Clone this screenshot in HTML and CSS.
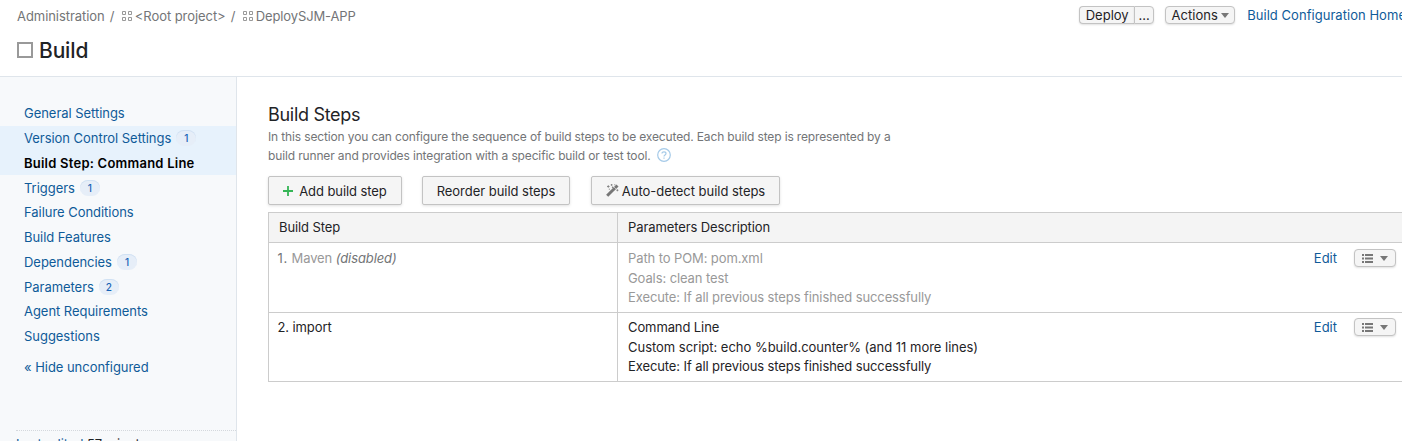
FILE: index.html
```html
<!DOCTYPE html>
<html lang="en">
<head>
<meta charset="utf-8">
<title>Build Steps</title>
<link rel="stylesheet" href="styles.css">
</head>
<body>
<header class="header">
  <div class="topbar">
    <nav class="crumbs">
      <span>Administration</span><span class="slash">/</span>
      <svg class="grid" viewBox="0 0 10 10"><path d="M.5.5h3v3h-3zM6.5.5h3v3h-3zM.5 6.5h3v3h-3zM6.5 6.5h3v3h-3z"/></svg><span>&lt;Root project&gt;</span><span class="slash">/</span>
      <svg class="grid" viewBox="0 0 10 10"><path d="M.5.5h3v3h-3zM6.5.5h3v3h-3zM.5 6.5h3v3h-3zM6.5 6.5h3v3h-3z"/></svg><span class="app">DeploySJM-APP</span>
    </nav>
    <div class="tools">
      <div class="split"><button class="mini deploy">Deploy</button><button class="mini more">...</button></div>
      <button class="mini actions">Actions<span class="caret"></span></button>
      <a class="home">Build Configuration Home</a>
    </div>
  </div>
  <div class="title"><span class="box"></span><h1>Build</h1></div>
</header>
<div class="body">
  <aside class="side">
    <ul class="menu">
      <li><a>General Settings</a></li>
      <li class="hl"><a>Version Control Settings</a><span class="badge">1</span></li>
      <li class="hl"><b>Build Step: Command Line</b></li>
      <li><a>Triggers</a><span class="badge">1</span></li>
      <li><a>Failure Conditions</a></li>
      <li><a>Build Features</a></li>
      <li><a>Dependencies</a><span class="badge">1</span></li>
      <li><a>Parameters</a><span class="badge">2</span></li>
      <li><a>Agent Requirements</a></li>
      <li><a>Suggestions</a></li>
    </ul>
    <a class="hide">« Hide unconfigured</a>
    <div class="edited"><a>Last edited</a> <span>57 minutes</span></div>
  </aside>
  <main class="main">
    <h2>Build Steps</h2>
    <p class="note">In this section you can configure the sequence of build steps to be executed. Each build step is represented by a<br>build runner and provides integration with a specific build or test tool. <svg class="help" viewBox="0 0 14 14"><circle cx="7" cy="7" r="6.3"/><path d="M5 5.600C5 4.400 5.800 3.800 7 3.800s2 .7 2 1.700C9 6.900 7 6.900 7 8.400M7 9.500v1.200"/></svg></p>
    <div class="buttons">
      <button class="btn add"><svg class="plus" viewBox="0 0 11 11"><path d="M5.500 0v11M0 5.500h11"/></svg>Add build step</button>
      <button class="btn reorder">Reorder build steps</button>
      <button class="btn auto"><svg class="wand" viewBox="0 0 13 13"><path class="stick" d="M1.200 11.800 11.500 1.500"/><path class="shine" d="M8.300 3.300l1.400 1.400"/><path class="spark" d="M1 2.500h2.600M2.300 1.200v2.600M4.700.9h1.800M5.600 0v1.800M5.900 3.300h1.400M6.600 2.600v1.400M10.400 6.300h2M11.400 5.300v2M8.200.8h1.200M2.800 5.200h1.200"/></svg>Auto-detect build steps</button>
    </div>
    <div class="table">
      <div class="row head"><div class="name">Build Step</div><div class="desc">Parameters Description</div></div>
      <div class="row disabled">
        <div class="name"><span class="num">1.</span> Maven <i>(disabled)</i></div>
        <div class="desc"><div>Path to POM: pom.xml</div><div>Goals: clean test</div><div>Execute: If all previous steps finished successfully</div></div>
        <a class="edit">Edit</a>
        <button class="mini list"><svg viewBox="0 0 11 9"><path d="M0 1h2M3 1h8M0 4.500h2M3 4.500h8M0 8h2M3 8h8"/></svg><span class="caret"></span></button>
      </div>
      <div class="row">
        <div class="name">2. import</div>
        <div class="desc"><div>Command Line</div><div class="script">Custom script: echo %build.counter% (and 11 more lines)</div><div>Execute: If all previous steps finished successfully</div></div>
        <a class="edit">Edit</a>
        <button class="mini list"><svg viewBox="0 0 11 9"><path d="M0 1h2M3 1h8M0 4.500h2M3 4.500h8M0 8h2M3 8h8"/></svg><span class="caret"></span></button>
      </div>
    </div>
  </main>
</div>
</body>
</html>
```
FILE: styles.css
```css
* { box-sizing: border-box; }
body { margin: 0; height: 441px; overflow: hidden; background: #fff; color: #1f2326; font: 13px/20px Inter, "Liberation Sans", sans-serif; display: flex; flex-direction: column; }
h1, h2, p, ul { margin: 0; padding: 0; font-weight: 400; }
button { font: inherit; letter-spacing: inherit; color: inherit; padding: 0; margin: 0; }
a { color: #0f5b99; }
svg { flex: none; }
.header { height: 77px; flex: none; border-bottom: 1px solid #dfe5eb; }
.topbar { display: flex; justify-content: space-between; height: 32px; }
.crumbs { display: flex; align-items: center; height: 20px; margin: 6px 0 0 17px; color: #737577; white-space: nowrap; letter-spacing: -.06px; }
.slash { margin: 0 7.500px 0 5px; }
.grid { width: 10px; height: 10px; fill: none; stroke: #999; margin-right: 3px; }
.app { letter-spacing: -.13px; }
.tools { display: flex; height: 19px; margin: 6px -4px 0 0; white-space: nowrap; }
.mini { height: 18px; border: 1px solid #c3c3c3; border-radius: 4px; background: #f5f5f5; box-shadow: 0 1px 2px rgba(0,0,0,.12); line-height: 17px; display: flex; align-items: center; justify-content: center; }
.split { display: flex; margin-right: 11px; }
.deploy { width: 55px; border-radius: 4px 0 0 4px; border-right: 0; }
.more { width: 20px; border-radius: 0 4px 4px 0; }
.actions { width: 70px; gap: 3px; margin-right: 12px; }
.caret { border: 4px solid transparent; border-top: 5px solid #777; border-bottom: 0; }
.home { line-height: 19px; letter-spacing: .04px; }
.title { display: flex; align-items: center; height: 36px; padding: 0 0 0 17px; }
.box { width: 16px; height: 16px; border: 2px solid #999; margin: 0 6px 0 0; }
h1 { font-size: 21px; line-height: 28px; font-weight: 500; letter-spacing: -.15px; padding-top: 1px; }
.body { display: flex; flex: 1; min-height: 0; }
.side { width: 237px; flex: none; background: #f7f9fb; border-right: 1px solid #dfe5eb; padding-top: 24px; white-space: nowrap; overflow: hidden; letter-spacing: -.04px; }
.menu { list-style: none; }
.menu li { display: flex; align-items: center; height: 24.750px; padding-left: 24px; }
.menu b { font-weight: 600; color: #000; letter-spacing: .23px; }
.hl { background: #e7f2fc; }
.badge { margin-left: 5px; width: 20px; height: 16px; border-radius: 8px; background: #e6eef8; box-shadow: inset 0 1px 0 #d0e1f3; color: #1763b6; font-size: 10px; line-height: 16px; text-align: center; font-weight: 500; }
.hide { display: block; padding-left: 24px; margin-top: 8.500px; }
.edited { margin: 53px 0 0 16px; border-top: 1px dotted #d4d8dd; padding-top: 3px; }
.main { flex: 1; min-width: 0; padding: 26px 0 0 31px; }
h2 { font-size: 18px; line-height: 24px; letter-spacing: -.3px; }
.note { font-size: 12px; line-height: 19px; color: #737577; white-space: nowrap; letter-spacing: -.14px; }
.help { width: 14px; height: 14px; fill: none; stroke: #a5cae8; stroke-width: 1.200; vertical-align: -2px; margin-left: 3px; }
.buttons { display: flex; margin: 11px 0 7px; }
.btn { height: 29px; border: 1px solid #c3c3c3; border-radius: 2px; background: #f5f5f5; box-shadow: 0 1px 3px rgba(0,0,0,.12); display: flex; align-items: center; justify-content: center; white-space: nowrap; letter-spacing: -.03px; }
.add { width: 134px; margin-right: 20px; gap: 6px; letter-spacing: -.08px; }
.reorder { width: 148px; margin-right: 21px; }
.auto { width: 189px; gap: 3px; }
.plus { width: 10px; height: 10px; stroke: #35b556; stroke-width: 2; }
.wand { width: 13px; height: 13px; fill: none; margin-top: -1px; }
.stick { stroke: #777; stroke-width: 3; }
.shine { stroke: #f5f5f5; stroke-width: .8; }
.spark { stroke: #777; stroke-width: .8; }
.table { border: 1px solid #ccc; border-right: 0; }
.row { display: flex; height: 69px; line-height: 19.500px; white-space: nowrap; letter-spacing: -.1px; }
.row + .row { border-top: 1px solid #ccc; }
.name { width: 349px; border-right: 1px solid #ccc; padding: 5px 0 0 8.500px; }
.desc { flex: 1; padding: 5px 0 0 10px; }
.script { letter-spacing: -.02px; }
.head { height: 29px; background: #f4f4f4; }
.head .name { padding-left: 10px; }
.disabled { height: 70px; color: #999; }
.disabled .name, .disabled .desc { padding-top: 6px; }
.num, .disabled i { color: #737577; }
.num { letter-spacing: .7px; }
.edit { margin: 5px 17px 0 0; letter-spacing: 0; }
.disabled .edit { margin-top: 6px; }
.list { width: 42px; margin: 5px 6px 0 0; gap: 7px; }
.disabled .list { margin-top: 6px; }
.list svg { width: 11px; height: 9px; stroke: #777; stroke-width: 2; }
```
